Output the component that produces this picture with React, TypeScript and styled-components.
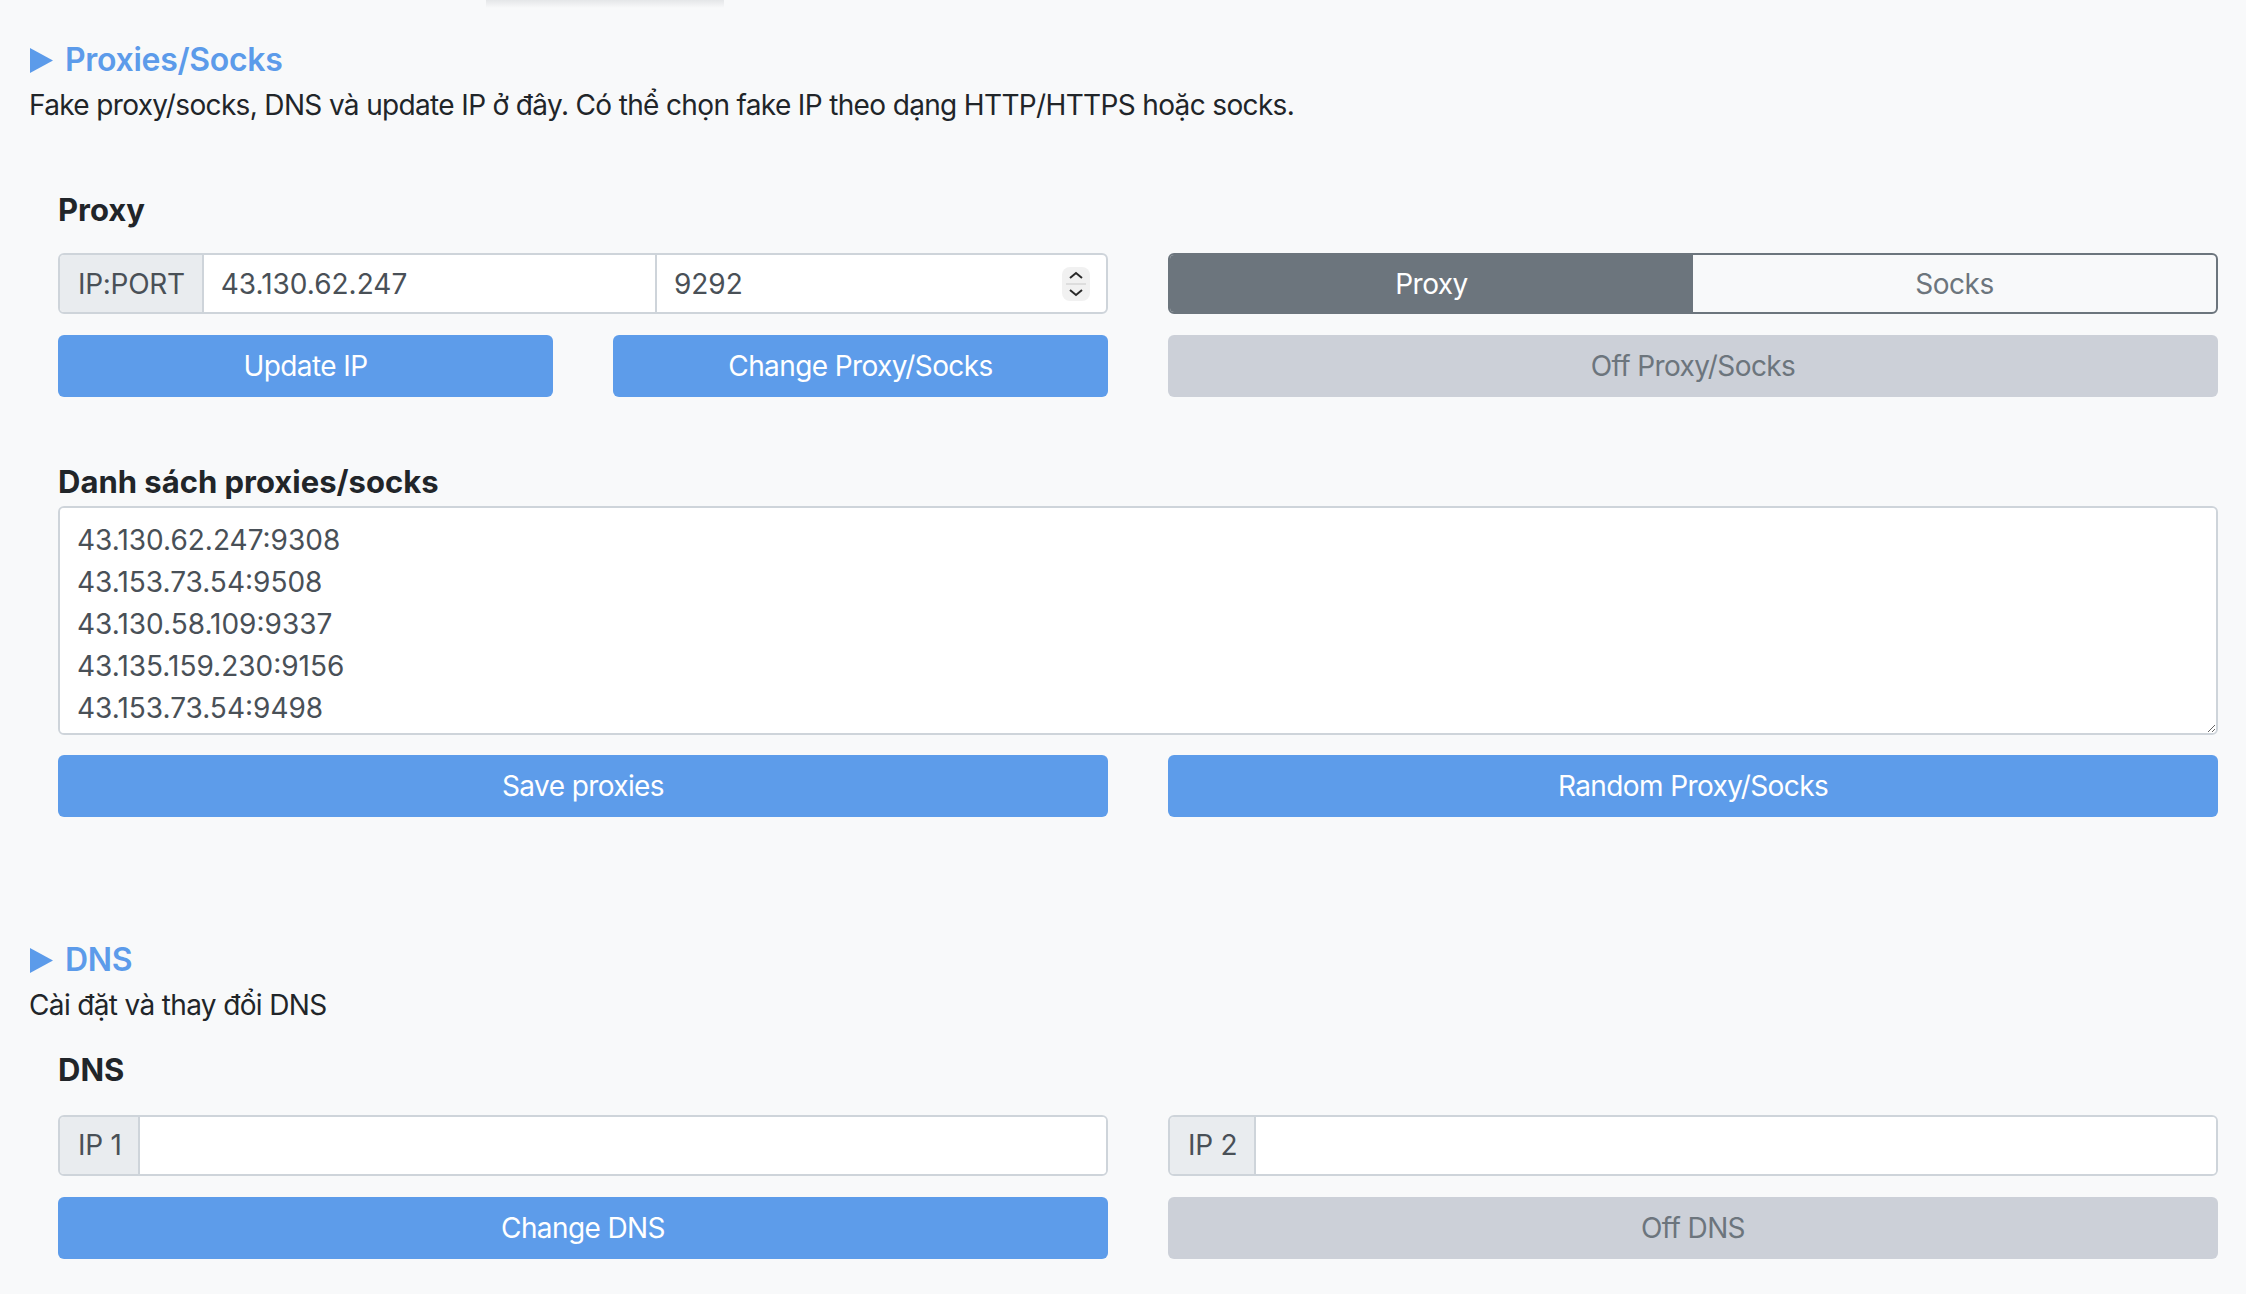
import React from 'react';
import styled, { createGlobalStyle } from 'styled-components';

const GlobalStyle = createGlobalStyle`
  body {
    margin: 0;
    background: #f8f9fa;
    font-family: Inter, "Noto Sans", "Liberation Sans", sans-serif;
    color: #212529;
  }
`

const Page = styled.div`
  min-height: 1294px;
  padding-right: 28px;
`

const TabShadow = styled.div`
  margin-left: 486px;
  width: 238px;
  height: 8px;
  background: linear-gradient(#e4e6e8, rgba(248, 249, 250, 0));
`

const SectionHeader = styled.div<{ top: number }>`
  display: flex;
  align-items: center;
  gap: 12px;
  margin-top: ${props => props.top}px;
  padding-left: 30px;
  height: 38px;
`

const SectionTitle = styled.h3`
  margin: 0;
  font-size: 32px;
  line-height: 38px;
  font-weight: 600;
  letter-spacing: -0.3px;
  color: #5c9bea;
`

const SectionDesc = styled.p`
  margin: 5px 0 0;
  padding-left: 29px;
  font-size: 28px;
  line-height: 42px;
  letter-spacing: -0.65px;
  color: #212529;
`

const Body = styled.div`
  padding-left: 58px;
`

const Label = styled.div<{ top: number }>`
  margin-top: ${props => props.top}px;
  font-size: 31px;
  line-height: 1.2;
  font-weight: 700;
  color: #212529;
`

const Row = styled.div<{ top: number }>`
  display: grid;
  grid-template-columns: minmax(0, 1fr) minmax(0, 1fr);
  column-gap: 60px;
  margin-top: ${props => props.top}px;
`

const Stack = styled.div`
  display: flex;
  flex-direction: column;
  gap: 21px;
  min-width: 0;
`

// addon + one or two equal fields
const InputGroup = styled.div<{ fields: number }>`
  display: grid;
  grid-template-columns: auto ${props => props.fields === 2 ? 'minmax(0, 1fr) minmax(0, 1fr)' : 'minmax(0, 1fr)'};
  height: 61px;
  box-sizing: border-box;
  border: 2px solid #ced4da;
  border-radius: 6px;
  overflow: hidden;
  background: #fff;
`

const Addon = styled.span`
  display: flex;
  align-items: center;
  padding: 0 17px 0 18px;
  background: #e9ecef;
  border-right: 2px solid #ced4da;
  font-size: 28px;
  letter-spacing: -0.3px;
  color: #495057;
`

const Field = styled.input`
  flex: 1;
  min-width: 0;
  width: 100%;
  box-sizing: border-box;
  border: none;
  padding: 0 17px;
  font-family: inherit;
  font-size: 28px;
  color: #495057;
  background: #fff;
  outline: none;
`

const PortField = styled.div`
  display: flex;
  align-items: center;
  min-width: 0;
  border-left: 2px solid #ced4da;
  padding-right: 16px;
`

const Spinner = styled.span`
  display: flex;
  flex: none;
  width: 28px;
  height: 34px;
  border-radius: 8px;
  background: #f1f1f1;
`

const Button = styled.button<{ variant: 'primary' | 'muted' }>`
  height: 62px;
  border: none;
  border-radius: 6px;
  font-family: inherit;
  font-size: 28px;
  letter-spacing: -0.6px;
  background: ${props => props.variant === 'primary' ? '#5d9cea' : '#ccd0d8'};
  color: ${props => props.variant === 'primary' ? '#ffffff' : '#6c757d'};
`

const Segmented = styled.div`
  display: grid;
  grid-template-columns: 1fr 1fr;
  height: 61px;
  box-sizing: border-box;
  border: 2px solid #6c757d;
  border-radius: 6px;
  overflow: hidden;
`

const Segment = styled.button<{ active?: boolean }>`
  border: none;
  font-family: inherit;
  font-size: 28px;
  letter-spacing: -0.5px;
  background: ${props => props.active ? '#6c757d' : 'transparent'};
  color: ${props => props.active ? '#ffffff' : '#6c757d'};
`

const ProxyList = styled.textarea`
  display: block;
  width: 100%;
  height: 229px;
  box-sizing: border-box;
  margin-top: 6px;
  padding: 11px 17px;
  border: 2px solid #ced4da;
  border-radius: 6px;
  font-family: inherit;
  font-size: 28px;
  line-height: 42px;
  color: #495057;
  background: #fff;
  outline: none;
`

const proxies = [
  '43.130.62.247:9308',
  '43.153.73.54:9508',
  '43.130.58.109:9337',
  '43.135.159.230:9156',
  '43.153.73.54:9498',
];

function Triangle() {
  return (
    <svg width="23" height="25" viewBox="0 0 23 25">
      <polygon points="0,0 23,12.5 0,25" fill="#5c9bea" />
    </svg>
  );
}

function SpinIcon() {
  return (
    <svg width="28" height="34" viewBox="0 0 28 34">
      <polyline points="8,11 14,6 20,11" fill="none" stroke="#2b2b2b" strokeWidth="2" />
      <line x1="4" y1="17" x2="24" y2="17" stroke="#d6d6d6" strokeWidth="1.5" />
      <polyline points="8,23 14,28 20,23" fill="none" stroke="#2b2b2b" strokeWidth="2" />
    </svg>
  );
}

export default function App() {
  return (
    <Page>
      <GlobalStyle />
      <TabShadow />

      <SectionHeader top={33}>
        <Triangle />
        <SectionTitle>Proxies/Socks</SectionTitle>
      </SectionHeader>
      <SectionDesc>Fake proxy/socks, DNS và update IP ở đây. Có thể chọn fake IP theo dạng HTTP/HTTPS hoặc socks.</SectionDesc>

      <Body>
        <Label top={65}>Proxy</Label>
        <Row top={25}>
          <Stack>
            <InputGroup fields={2}>
              <Addon>IP:PORT</Addon>
              <Field defaultValue="43.130.62.247" />
              <PortField>
                <Field defaultValue="9292" />
                <Spinner><SpinIcon /></Spinner>
              </PortField>
            </InputGroup>
            <Row top={0}>
              <Button variant="primary">Update IP</Button>
              <Button variant="primary">Change Proxy/Socks</Button>
            </Row>
          </Stack>
          <Stack>
            <Segmented>
              <Segment active>Proxy</Segment>
              <Segment>Socks</Segment>
            </Segmented>
            <Button variant="muted">Off Proxy/Socks</Button>
          </Stack>
        </Row>

        <Label top={66}>Danh sách proxies/socks</Label>
        <ProxyList defaultValue={proxies.join('\n')} spellCheck={false} />
        <Row top={20}>
          <Button variant="primary">Save proxies</Button>
          <Button variant="primary">Random Proxy/Socks</Button>
        </Row>
      </Body>

      <SectionHeader top={124}>
        <Triangle />
        <SectionTitle>DNS</SectionTitle>
      </SectionHeader>
      <SectionDesc>Cài đặt và thay đổi DNS</SectionDesc>

      <Body>
        <Label top={25}>DNS</Label>
        <Row top={26}>
          <Stack>
            <InputGroup fields={1}>
              <Addon>IP 1</Addon>
              <Field />
            </InputGroup>
            <Button variant="primary">Change DNS</Button>
          </Stack>
          <Stack>
            <InputGroup fields={1}>
              <Addon>IP 2</Addon>
              <Field />
            </InputGroup>
            <Button variant="muted">Off DNS</Button>
          </Stack>
        </Row>
      </Body>
    </Page>
  );
}
